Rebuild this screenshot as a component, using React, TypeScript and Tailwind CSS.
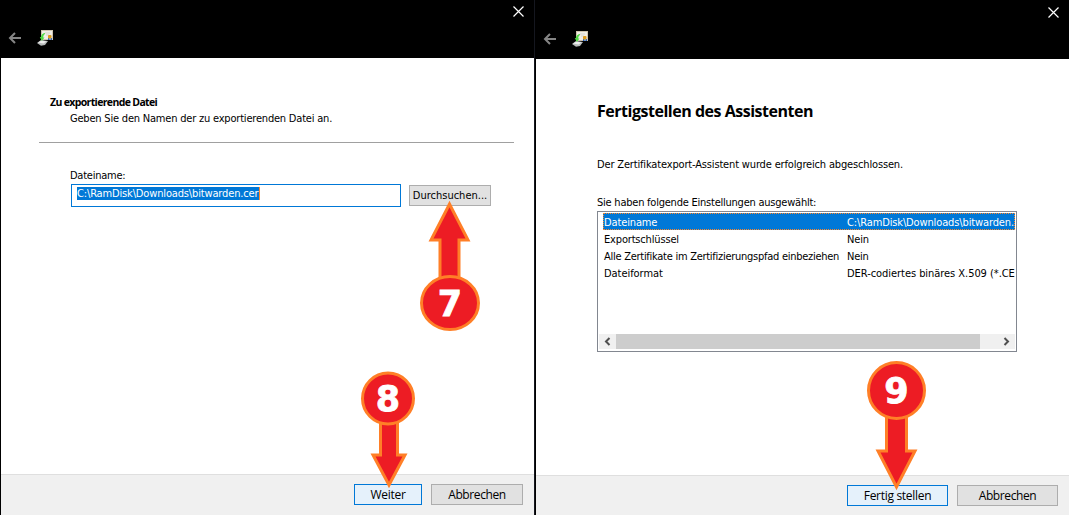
import type { ReactNode } from "react";

const TAHOMA = "font-['DejaVu_Sans_Condensed','DejaVu_Sans',sans-serif] [font-stretch:condensed] text-[11px] whitespace-pre";
const SEGOE = "font-['Open_Sans','Noto_Sans',sans-serif] whitespace-pre";

function CertificateIcon() {
  return (
    <svg width="16" height="16" viewBox="0 0 16 16" className="block">
      <rect x="4" y="0" width="12" height="10" fill="#cfc3ae" />
      <rect x="5" y="1" width="10" height="8" fill="#f0ede6" />
      <path d="M8 3h5M9 5h3" stroke="#d5d2cb" />
      <path d="M11 8h1.500v2H11zM13.500 8H15v2h-1.500z" fill="#245fc0" />
      <rect x="11" y="5" width="3.500" height="3.500" rx="1" fill="#dd9a1c" />
      <path d="M0 13l4-3 7 1-3 4-4 .8z" fill="#b9bcbc" />
      <path d="M1 12.500l3.500-2 5 1-3 2z" fill="#eeeeee" />
      <path d="M8 3C5 3.500 4.300 5 4 7H2.800l2 4L7.500 7.500H6.200C6.300 5.500 7 4.500 8 4z" fill="#50d943" />
    </svg>
  );
}

function TitleBar({ className }: { className: string }) {
  return (
    <header className={`flex flex-col bg-black ${className}`}>
      <div className="flex h-[22px] shrink-0 justify-end pt-[6px] pr-[10px]">
        <svg width="11" height="11" viewBox="0 0 11 11" className="block">
          <path d="M.5.5l10 10M10.500.5l-10 10" stroke="#fff" strokeWidth="1.200" />
        </svg>
      </div>
      <div className="flex h-8 items-center pl-2">
        <svg width="13" height="12" viewBox="0 0 13 12" className="mr-4 block">
          <path d="M13 6H2M7 1L2 6l5 5" fill="none" stroke="#858585" strokeWidth="2" />
        </svg>
        <CertificateIcon />
      </div>
    </header>
  );
}

function DialogButton({ primary, className, children }: { primary?: boolean; className: string; children: ReactNode }) {
  return (
    <button
      className={`flex h-[21px] items-center justify-center border text-black ${
        primary ? "border-[#0078d7] bg-[#e5f1fb]" : "border-[#adadad] bg-[#e1e1e1]"
      } ${className}`}
    >
      {children}
    </button>
  );
}

function Marker({ digit, className, width, height, cx, cy, rx, ry, arrow }: {
  digit: string; className: string; width: number; height: number;
  cx: number; cy: number; rx: number; ry: number; arrow: string;
}) {
  return (
    <svg width={width} height={height} viewBox={`0 0 ${width} ${height}`} className={`absolute ${className}`}>
      <path d={arrow} fill="#ed1c24" stroke="#ff7f27" strokeWidth="3" />
      <ellipse cx={cx} cy={cy} rx={rx} ry={ry} fill="#ed1c24" stroke="#ff7f27" strokeWidth="3" />
      <text x={cx} y={cy + 12.5} textAnchor="middle" fill="#fff" stroke="#fff" strokeWidth=".8" className="font-['DejaVu_Sans',sans-serif] text-[35px] font-bold">
        {digit}
      </text>
    </svg>
  );
}

const settings = [
  { name: "Dateiname", value: "C:\\RamDisk\\Downloads\\bitwarden.", spacing: "tracking-[-0.13px]" },
  { name: "Exportschlüssel", value: "Nein", spacing: "tracking-[-0.17px]" },
  { name: "Alle Zertifikate im Zertifizierungspfad einbeziehen", value: "Nein", spacing: "tracking-[-0.27px]" },
  { name: "Dateiformat", value: "DER-codiertes binäres X.509 (*.CE", spacing: "tracking-[-0.05px]" },
];

function ExportFilePage() {
  return (
    <section className="flex w-[534px] flex-col border-l border-black bg-white">
      <TitleBar className="-ml-px h-[58px]" />
      <main className="flex grow flex-col pt-[37px]">
        <h1 className={`${SEGOE} ml-[49px] h-4 text-[10.5px] leading-[15px] font-bold tracking-[-0.65px]`}>Zu exportierende Datei</h1>
        <p className={`${TAHOMA} ml-[69px] h-4 leading-[15px] tracking-[-0.2px]`}>Geben Sie den Namen der zu exportierenden Datei an.</p>
        <hr className="mt-[15px] ml-[38px] w-[475px] border-[#a0a0a0]" />
        <label className={`${TAHOMA} mt-6 ml-[69px] h-[17px] leading-[17px] tracking-[-0.25px]`}>Dateiname:</label>
        <div className="ml-[70px] flex items-center gap-2">
          <div className="flex h-[23px] w-[330px] border border-[#0078d7] pt-[2px] pl-[5px]">
            <span className={`${TAHOMA} h-[13px] w-[183px] border-r border-[#ff8728] bg-[#0078d7] leading-[14px] tracking-[-0.15px] text-white`}>C:\RamDisk\Downloads\bitwarden.cer</span>
          </div>
          <DialogButton className={`${TAHOMA} w-[82px] pt-[2px]`}>Durchsuchen...</DialogButton>
        </div>
      </main>
      <footer className="flex h-[41px] justify-end gap-[9px] border-t border-[#dfdfdf] bg-[#f0f0f0] pt-[9px] pr-[11px]">
        <DialogButton primary className={`${SEGOE} w-[68px] text-xs tracking-[-0.3px]`}>Weiter</DialogButton>
        <DialogButton className={`${SEGOE} w-[92px] text-xs tracking-[-0.4px]`}>Abbrechen</DialogButton>
      </footer>
    </section>
  );
}

function FinishPage() {
  return (
    <section className="flex w-[533px] flex-col bg-white">
      <TitleBar className="-ml-px h-[59px] pt-px" />
      <main className="flex grow flex-col pt-10 pl-[61px]">
        <h1 className={`${SEGOE} h-6 text-[16px] leading-[25px] font-bold tracking-[-0.48px]`}>Fertigstellen des Assistenten</h1>
        <p className={`${TAHOMA} mt-[33px] h-4 leading-[17px] tracking-[-0.16px]`}>Der Zertifikatexport-Assistent wurde erfolgreich abgeschlossen.</p>
        <p className={`${TAHOMA} mt-[22px] h-[17px] leading-[17px] tracking-[-0.23px]`}>Sie haben folgende Einstellungen ausgewählt:</p>
        <div className="flex h-[141px] w-[420px] flex-col border border-[#828790] p-px">
          {settings.map(({ name, value, spacing }, index) => (
            <div
              key={name}
              className={`${TAHOMA} ${spacing} ml-1 flex h-[17px] shrink-0 leading-[19px] ${
                index === 0 ? "bg-[#0078d7] text-white outline outline-dotted -outline-offset-1 outline-[#ff8728]" : "text-black"
              }`}
            >
              <span className="w-[244px] shrink-0 pl-px">{name}</span>
              <span>{value}</span>
            </div>
          ))}
          <div className="mt-auto mb-px flex h-[15px] bg-[#f0f0f0]">
            <svg width="17" height="15" viewBox="0 0 17 15" className="shrink-0">
              <path d="M10.500 4l-3.500 3.500 3.500 3.500" fill="none" stroke="#505050" strokeWidth="2" />
            </svg>
            <div className="w-[364px] bg-[#cdcdcd]" />
            <svg width="17" height="15" viewBox="0 0 17 15" className="ml-auto shrink-0">
              <path d="M6.500 4l3.500 3.500-3.500 3.500" fill="none" stroke="#505050" strokeWidth="2" />
            </svg>
          </div>
        </div>
      </main>
      <footer className="flex h-10 justify-end gap-[9px] border-t border-[#dfdfdf] bg-[#f0f0f0] pt-[9px] pr-[11px]">
        <DialogButton primary className={`${SEGOE} w-[101px] text-xs tracking-[-0.3px]`}>Fertig stellen</DialogButton>
        <DialogButton className={`${SEGOE} w-[101px] text-xs tracking-[-0.4px]`}>Abbrechen</DialogButton>
      </footer>
    </section>
  );
}

export default function App() {
  return (
    <div className="relative flex h-[515px] w-[1069px] overflow-hidden bg-white text-black">
      <ExportFilePage />
      <div className="w-[2px] border-l border-[#15171f] bg-black" />
      <FinishPage />
      <Marker digit="7" className="top-[198px] left-[418px]" width={64} height={136} cx={32} cy={105} rx={28.5} ry={26.5}
        arrow="M22 84V42H13L31.500 6 50 42H41V84" />
      <Marker digit="8" className="top-[369px] left-[359px]" width={60} height={122} cx={29} cy={29.5} rx={25.5} ry={25.5}
        arrow="M21.500 50V86H14L30 116 46 86H38.500V50" />
      <Marker digit="9" className="top-[359px] left-[865px]" width={64} height={134} cx={31.5} cy={31.5} rx={28} ry={28}
        arrow="M21.500 55V92H13L31.500 128 50 92H41.500V55" />
    </div>
  );
}
